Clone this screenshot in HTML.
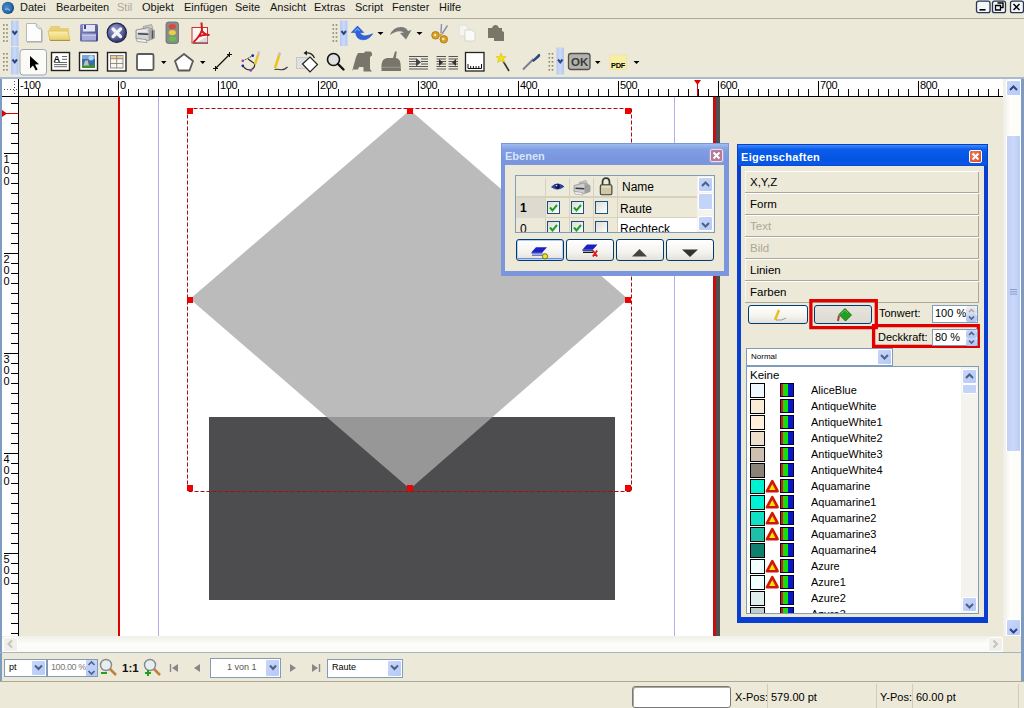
<!DOCTYPE html>
<html><head><meta charset="utf-8">
<style>
*{margin:0;padding:0;box-sizing:border-box}
html,body{width:1024px;height:708px;overflow:hidden;background:#ECE9D8;font-family:"Liberation Sans",sans-serif;font-size:11px;color:#000;position:relative}
.a{position:absolute}
.menu span{position:absolute;top:1px;font-size:11px;color:#141414}
.grip{position:absolute;width:6px;background-image:radial-gradient(circle at 1px 1px,#A5A08A 1px,transparent 1.2px);background-size:3.5px 3.5px}
.hdl{position:absolute;width:8px;background:linear-gradient(90deg,#B8CCF4,#CAD8F8 50%,#B0C4F0)}
.hdl:after{content:"";position:absolute;left:1px;width:6px;height:4px;top:var(--cv);background:linear-gradient(45deg,transparent 49%,#3C5A9C 50%,#3C5A9C 70%,transparent 71%) left/3px 4px no-repeat,linear-gradient(-45deg,transparent 49%,#3C5A9C 50%,#3C5A9C 70%,transparent 71%) right/3px 4px no-repeat}
.dd{position:absolute;width:0;height:0;border-left:3px solid transparent;border-right:3px solid transparent;border-top:3px solid #000}
.btn{position:absolute;border:1px solid #003C74;border-radius:3px;background:linear-gradient(#FFFFFF,#F4F3EE 60%,#E3E1D8)}
.chk{position:absolute;width:13px;height:13px;border:1px solid #1C5180;background:linear-gradient(135deg,#DCDCD7,#FFFFFF)}
.tab{position:absolute;left:745px;width:234px;height:22px;border-top:1px solid #fff;border-bottom:1px solid #ACA899;font-size:11.5px;padding:4px 0 0 5px}
.sbb{position:absolute;width:14px;height:14px;border-radius:2px;background:linear-gradient(135deg,#C8D6FA,#B6C9F6);border:1px solid #fff}
.row{position:absolute;left:750px;height:16px;width:200px}
.sw{position:absolute;left:0;top:0;width:15px;height:15px;border:1px solid #000}
.rgb{position:absolute;left:30px;top:0;width:14px;height:14px;border:1px solid #000030;background:linear-gradient(90deg,#E81010 0 2.5px,#10E010 2.5px 7.5px,#0818C8 7.5px)}
.warn{position:absolute;left:15px;top:0}
.nm{position:absolute;left:61px;top:1px;font-size:11px}
</style></head><body>
<!-- menu bar -->
<div class="a menu" style="left:0;top:0;width:1024px;height:18px">
  <svg class="a" style="left:0;top:0" width="18" height="18"><defs><radialGradient id="gApp" cx="0.4" cy="0.45" r="0.6"><stop offset="0" stop-color="#4E90CC"/><stop offset="0.7" stop-color="#2A68A8"/><stop offset="1" stop-color="#163C68"/></radialGradient></defs><circle cx="7.9" cy="7.9" r="6.1" fill="url(#gApp)"/><path d="M5 9.5Q8 8 10 10.5" stroke="#8CC0E8" stroke-width="1.2" fill="none"/></svg>
  <span style="left:20px">Datei</span>
  <span style="left:56px">Bearbeiten</span>
  <span style="left:117px;color:#ACA899">Stil</span>
  <span style="left:142px">Objekt</span>
  <span style="left:184px">Einfügen</span>
  <span style="left:235px">Seite</span>
  <span style="left:270px">Ansicht</span>
  <span style="left:314px">Extras</span>
  <span style="left:355px">Script</span>
  <span style="left:392px">Fenster</span>
  <span style="left:439px">Hilfe</span>
  <svg class="a" style="left:975px;top:0" width="49" height="15">
    <rect x="1.5" y="1.2" width="13.5" height="11.5" rx="2" fill="#F4F6FA" stroke="#243654" stroke-width="1.3"/>
    <rect x="17.5" y="1.2" width="13" height="11.5" rx="2" fill="#F4F6FA" stroke="#243654" stroke-width="1.3"/>
    <rect x="35.5" y="1.2" width="13" height="11.5" rx="2" fill="#F4F6FA" stroke="#243654" stroke-width="1.3"/>
    <path d="M4.5 9.8H10.5" stroke="#000" stroke-width="1.6"/>
    <path d="M20.5 5.5H25.5V10H20.5Z" fill="none" stroke="#000" stroke-width="1.3"/><path d="M22.5 3H28V7.5H26" fill="none" stroke="#000" stroke-width="1.4"/>
    <path d="M38.5 4L44.5 10M44.5 4L38.5 10" stroke="#000" stroke-width="1.5"/>
  </svg>
</div>
<div class="a" style="left:0;top:18px;width:1024px;height:1px;background:#ACA899"></div>

<!-- toolbar grips -->
<svg class="a" style="left:0;top:0" width="1024" height="78">
<defs><linearGradient id="gHdl" x1="0" y1="0" x2="1" y2="0"><stop offset="0" stop-color="#B4C8F2"/><stop offset="0.5" stop-color="#CCDAF8"/><stop offset="1" stop-color="#B4C6F0"/></linearGradient></defs>
<rect x="3" y="24.2" width="1.6" height="1.6" fill="#8A8670"/><rect x="6.2" y="24.2" width="1.6" height="1.6" fill="#8A8670"/><rect x="3" y="28.2" width="1.6" height="1.6" fill="#8A8670"/><rect x="6.2" y="28.2" width="1.6" height="1.6" fill="#8A8670"/><rect x="3" y="32.2" width="1.6" height="1.6" fill="#8A8670"/><rect x="6.2" y="32.2" width="1.6" height="1.6" fill="#8A8670"/><rect x="3" y="36.2" width="1.6" height="1.6" fill="#8A8670"/><rect x="6.2" y="36.2" width="1.6" height="1.6" fill="#8A8670"/><rect x="3" y="40.2" width="1.6" height="1.6" fill="#8A8670"/><rect x="6.2" y="40.2" width="1.6" height="1.6" fill="#8A8670"/><rect x="3" y="53" width="1.6" height="1.6" fill="#8A8670"/><rect x="6.2" y="53" width="1.6" height="1.6" fill="#8A8670"/><rect x="3" y="57" width="1.6" height="1.6" fill="#8A8670"/><rect x="6.2" y="57" width="1.6" height="1.6" fill="#8A8670"/><rect x="3" y="61" width="1.6" height="1.6" fill="#8A8670"/><rect x="6.2" y="61" width="1.6" height="1.6" fill="#8A8670"/><rect x="3" y="65" width="1.6" height="1.6" fill="#8A8670"/><rect x="6.2" y="65" width="1.6" height="1.6" fill="#8A8670"/><rect x="3" y="69" width="1.6" height="1.6" fill="#8A8670"/><rect x="6.2" y="69" width="1.6" height="1.6" fill="#8A8670"/><rect x="332.5" y="24.2" width="1.6" height="1.6" fill="#8A8670"/><rect x="335.7" y="24.2" width="1.6" height="1.6" fill="#8A8670"/><rect x="332.5" y="28.2" width="1.6" height="1.6" fill="#8A8670"/><rect x="335.7" y="28.2" width="1.6" height="1.6" fill="#8A8670"/><rect x="332.5" y="32.2" width="1.6" height="1.6" fill="#8A8670"/><rect x="335.7" y="32.2" width="1.6" height="1.6" fill="#8A8670"/><rect x="332.5" y="36.2" width="1.6" height="1.6" fill="#8A8670"/><rect x="335.7" y="36.2" width="1.6" height="1.6" fill="#8A8670"/><rect x="332.5" y="40.2" width="1.6" height="1.6" fill="#8A8670"/><rect x="335.7" y="40.2" width="1.6" height="1.6" fill="#8A8670"/><rect x="548.5" y="53" width="1.6" height="1.6" fill="#8A8670"/><rect x="551.7" y="53" width="1.6" height="1.6" fill="#8A8670"/><rect x="548.5" y="57" width="1.6" height="1.6" fill="#8A8670"/><rect x="551.7" y="57" width="1.6" height="1.6" fill="#8A8670"/><rect x="548.5" y="61" width="1.6" height="1.6" fill="#8A8670"/><rect x="551.7" y="61" width="1.6" height="1.6" fill="#8A8670"/><rect x="548.5" y="65" width="1.6" height="1.6" fill="#8A8670"/><rect x="551.7" y="65" width="1.6" height="1.6" fill="#8A8670"/><rect x="548.5" y="69" width="1.6" height="1.6" fill="#8A8670"/><rect x="551.7" y="69" width="1.6" height="1.6" fill="#8A8670"/><rect x="11" y="20.5" width="7.5" height="25.5" fill="url(#gHdl)"/><path d="M12.5 31L14.75 33.8L17 31" fill="none" stroke="#2E4480" stroke-width="2"/><rect x="11" y="47" width="7.5" height="27.5" fill="url(#gHdl)"/><path d="M12.5 59.5L14.75 62.3L17 59.5" fill="none" stroke="#2E4480" stroke-width="2"/><rect x="340" y="20.5" width="7.5" height="25.5" fill="url(#gHdl)"/><path d="M341.5 31L343.75 33.8L346 31" fill="none" stroke="#2E4480" stroke-width="2"/><rect x="556.5" y="47.5" width="7.5" height="27" fill="url(#gHdl)"/><path d="M558.0 59.5L560.25 62.3L562.5 59.5" fill="none" stroke="#2E4480" stroke-width="2"/>
</svg>
<svg class="a" style="left:0;top:0" width="1024" height="78">
<defs>
  <linearGradient id="gFold" x1="0" y1="0" x2="0" y2="1"><stop offset="0" stop-color="#FBF0B0"/><stop offset="1" stop-color="#E8CF6A"/></linearGradient>
  <linearGradient id="gFlop" x1="0" y1="0" x2="1" y2="1"><stop offset="0" stop-color="#8C92C8"/><stop offset="1" stop-color="#3A4080"/></linearGradient>
  <radialGradient id="gClose" cx="0.4" cy="0.35" r="0.7"><stop offset="0" stop-color="#9AA0D0"/><stop offset="0.6" stop-color="#5A609A"/><stop offset="1" stop-color="#262A58"/></radialGradient>
  <linearGradient id="gGray" x1="0" y1="0" x2="1" y2="1"><stop offset="0" stop-color="#E8E8E8"/><stop offset="1" stop-color="#8A8A8A"/></linearGradient>
</defs>
<!-- new doc -->
<path d="M26.5 23.5H36L41.5 29V41.5H26.5Z" fill="#FDFDFD" stroke="#B8B8B4"/>
<path d="M36 23.5Q36 29 41.5 29" fill="#E8E8E8" stroke="#B0B0B0"/>
<path d="M27 42H42V30" fill="none" stroke="#A8A8A0"/>
<!-- folder -->
<path d="M49 29L51 26H59L61 28H69V40H49Z" fill="#E6CF78"/>
<path d="M48 31H68L70 40H50Z" fill="url(#gFold)" stroke="#D8BD5C" stroke-width="0.8"/>
<path d="M50 40.5H70" stroke="#A89450" stroke-width="1"/>
<!-- floppy -->
<rect x="80" y="24" width="18" height="17.5" rx="1.5" fill="url(#gFlop)"/>
<rect x="83" y="25" width="12" height="6.5" fill="#E4E6F4"/>
<rect x="84" y="25" width="2" height="4" fill="#404890"/>
<rect x="82" y="33.5" width="14" height="7" fill="#A8ACD8"/>
<path d="M82 35.5H96" stroke="#C8CCEC"/>
<!-- close circle -->
<circle cx="116.8" cy="32.8" r="9.6" fill="url(#gClose)" stroke="#22264E" stroke-width="1.2"/>
<path d="M113 29L120.6 36.6M120.6 29L113 36.6" stroke="#F4F4F8" stroke-width="3.2" stroke-linecap="round"/>
<!-- printer -->
<path d="M143 26.5L151.5 24.5L153 28.5L144.5 30.5Z" fill="#C8C8C8" stroke="#8A8A8A" stroke-width="0.6"/>
<path d="M136 30L148 27.5L154.5 30.5V38L148.5 40.5L136 38.5Z" fill="#D4D4D4" stroke="#7A7A7A" stroke-width="0.7"/>
<path d="M137 31H147" stroke="#F4F4F4" stroke-width="1.4"/>
<path d="M138 33.8L148.5 34.3" stroke="#3A3A46" stroke-width="1.6"/>
<path d="M148.5 29V40.5L154.5 38V30.5Z" fill="#A8A8A8"/>
<path d="M152.5 30.5V38.5" stroke="#505050" stroke-width="1.4"/>
<path d="M136 38.5L146 39.5L147 42.5L137 41.5Z" fill="#F2F2F2" stroke="#8A8A8A" stroke-width="0.7"/>
<!-- traffic light -->
<rect x="166" y="22" width="12.5" height="21.5" rx="2.5" fill="#8A8A86" stroke="#6A6A66" stroke-width="0.8"/>
<ellipse cx="172.3" cy="26.5" rx="3.6" ry="2.6" fill="#D84848"/>
<ellipse cx="172.3" cy="32.6" rx="3.6" ry="2.6" fill="#E8D040"/>
<ellipse cx="172.3" cy="38.8" rx="3.6" ry="2.6" fill="#60C050"/>
<!-- pdf -->
<rect x="192" y="27.5" width="15.5" height="15.5" fill="#FAF6F6" stroke="#C83030" stroke-width="1"/>
<path d="M207.5 43H196L207.5 36Z" fill="#D0D4DC" opacity="0.8"/>
<path d="M193 43H208" stroke="#7A2020" stroke-width="1"/>
<path d="M201.5 22.5L202 30Q199.5 37 193.5 42M201.5 30Q204 35 209.5 35Q204 34 198 36.5" fill="none" stroke="#D81818" stroke-width="2"/>
<!-- undo -->
<path d="M351.3 32.5L357.5 25.9L363.8 32.5L360 32.5Q362 36.5 366 35.8Q369.5 35 372.7 33.7Q369 39.8 363 39.8Q356.5 39.8 355.5 32.5Z" fill="#2C64E0" stroke="#1A44B0" stroke-width="0.5"/>
<path d="M355 31.5L357.5 28.5L359.5 31" fill="none" stroke="#90BCFF" stroke-width="1"/>
<path d="M377.5 32H383.5L380.5 35Z" fill="#000"/>
<!-- redo -->
<path d="M390 35Q393 27 401 27Q406 27 408 31L411.5 30L406 39.5L400 33L404 32.5Q401 30.5 397 31.5Q393 32.5 390 35Z" fill="#7A7A76"/>
<path d="M416.5 32H422.5L419.5 35Z" fill="#000"/>
<!-- scissors -->
<path d="M441 33L441.5 24M442 34L447.5 25.5" stroke="#8A8EB0" stroke-width="1.4"/>
<circle cx="435.5" cy="35.3" r="3.8" fill="#D8A020" stroke="#A87010" stroke-width="0.8"/>
<circle cx="443.8" cy="39.3" r="3.8" fill="#D8A020" stroke="#A87010" stroke-width="0.8"/>
<circle cx="435" cy="35" r="1.3" fill="#F8E8B0"/><circle cx="443.3" cy="39" r="1.3" fill="#F8E8B0"/>
<path d="M438.5 34L442 33.5L441 37" fill="#D8A020"/>
<!-- copy -->
<path d="M459 25H466L468 27V36H459Z" fill="#F4F4F2" stroke="#DADAD6" stroke-width="0.8"/>
<path d="M465 30H472L475 33V41H465Z" fill="#FAFAF8" stroke="#CFCFCA" stroke-width="0.8"/>
<!-- paste -->
<path d="M488 28H492Q493 25 495.5 25Q498 25 499 28H502V31L504 32V41H494V38H488Z" fill="#797769"/>
<!-- selected button -->
<rect x="20" y="49.5" width="26.5" height="25.5" rx="3" fill="#FAFAF7" stroke="#9DA5B0" stroke-width="1"/>
<path d="M30 56V68.5L33 65.5L35.8 70.5L37.6 69.5L35 64.5L39 64.3Z" fill="#000"/>
<!-- text frame -->
<rect x="51.5" y="52.5" width="18" height="18" fill="#fff" stroke="#222" stroke-width="1.4"/>
<text x="53.6" y="61.5" font-family="Liberation Sans" font-size="9" font-weight="bold" fill="#111">A</text>
<path d="M62 56.5H67M62 59.3H67M54 62.5H67M54 64.6H67M54 66.7H67" stroke="#333" stroke-width="0.75"/>
<!-- image frame -->
<rect x="79.5" y="52.5" width="18" height="18" fill="#fff" stroke="#222" stroke-width="1.4"/>
<rect x="82" y="55" width="13" height="13" fill="#3A6EA8"/>
<rect x="82" y="55" width="13" height="4" fill="#7CA8D8"/>
<circle cx="91" cy="58" r="2.5" fill="#B8D8F0"/>
<rect x="82" y="65" width="13" height="3" fill="#3C9030"/>
<path d="M83.5 65.5L85 61L87.5 60L89 65.5Z" fill="#C8C0B8"/>
<!-- table -->
<rect x="107.5" y="52.5" width="18.5" height="18.5" fill="#fff" stroke="#222" stroke-width="1.4"/>
<rect x="110.5" y="55.5" width="12.5" height="12.5" fill="#FBF6E8" stroke="#777" stroke-width="0.8"/>
<rect x="111" y="56" width="11.5" height="2.5" fill="#F0D090"/>
<path d="M116.7 55.5V68M110.5 58.7H123M110.5 63.5H123" stroke="#777" stroke-width="0.8"/>
<!-- rect shape -->
<rect x="137" y="54" width="16.5" height="16" rx="1.5" fill="#fff" stroke="#5A5A5A" stroke-width="1.8"/>
<path d="M161 61H166.5L163.75 64Z" fill="#000"/>
<!-- pentagon -->
<path d="M184 54L193 61L189.5 70.5H178.5L175 61Z" fill="#fff" stroke="#5A5A5A" stroke-width="1.8" stroke-linejoin="round"/>
<path d="M200 61H205.5L202.75 64Z" fill="#000"/>
<!-- line -->
<path d="M215.5 68.5L229.5 54.5" stroke="#111" stroke-width="1.2"/>
<path d="M213 68.5H218M215.5 66V71M227 54.5H232M229.5 52V57" stroke="#111" stroke-width="1"/>
<!-- bezier -->
<path d="M243 60.8L252.7 55.7" stroke="#333" stroke-width="1" stroke-dasharray="1.5,1"/>
<path d="M242.8 65.8Q246.5 70.5 251 69.8Q255.5 67.5 254.5 63.5L248 59" fill="none" stroke="#222" stroke-width="1.1"/>
<path d="M255 64.5L258.2 54.5" stroke="#E8C428" stroke-width="2.4"/><path d="M258 55L259 51.5" stroke="#D8B8C0" stroke-width="2.4"/>
<circle cx="252.7" cy="55.7" r="1.4" fill="#1828A8"/><circle cx="242.8" cy="60.8" r="1.4" fill="#A040C0"/><circle cx="242.8" cy="65.8" r="1.4" fill="#1828A8"/><circle cx="250.8" cy="70.4" r="1.4" fill="#A040C0"/>
<!-- freehand -->
<path d="M275 68L279.2 55" stroke="#E8C428" stroke-width="2.6"/><path d="M279 55.5L280 52.5" stroke="#D8B8C0" stroke-width="2.6"/>
<path d="M274.5 69.5Q278 69 281 69.8Q284.5 70 287.5 67" fill="none" stroke="#333" stroke-width="1.1"/>
<!-- rotate -->
<rect x="296.5" y="57.5" width="11" height="11" fill="#E0E0E0" stroke="#999" stroke-width="0.8" stroke-dasharray="1,1"/>
<path d="M302.5 64L310 57L317.5 64.5L310 72Z" fill="#fff" stroke="#222" stroke-width="1.2"/>
<path d="M306 53Q312 52.5 314.5 58" fill="none" stroke="#222" stroke-width="1.2"/><path d="M303.5 53L307 50.5V55.5Z" fill="#222"/>
<!-- zoom -->
<circle cx="333.5" cy="59.5" r="6" fill="#E0E0E0" stroke="#111" stroke-width="1.6"/>
<path d="M338 64L343.5 69.5" stroke="#111" stroke-width="2.4" stroke-linecap="round"/>
<!-- edit text -->
<path d="M352 71.5L353 68L356 57L358 53H364L365 51.5H370.5L372 53V55.5L370 57V69L372 71.5H363.5V67H359L358 69.5H352Z" fill="#78766A"/>
<!-- story editor -->
<path d="M381.5 71V65Q382 58.5 387 58H393L395 51.5H396.8L395.8 58Q400 58.5 400.5 63.5L401 71Z" fill="#78766A"/>
<path d="M381.5 67.3H401" stroke="#A8A498" stroke-width="0.8"/>
<!-- link frames -->
<path d="M409 56.5H428M409 59H416M421 59H428M409 61.5H416M421 61.5H428M409 64H416M421 64H428M409 66.5H428M409 69H428" stroke="#555" stroke-width="1"/>
<path d="M416 58L421 62.2L416 66.5Z" fill="#444"/>
<!-- unlink -->
<path d="M436.5 56.5H446M436.5 59H446M436.5 61.5H446M436.5 64H446M436.5 66.5H446M436.5 69H446M448.5 56.5H458M448.5 59H458M448.5 61.5H458M448.5 64H458M448.5 66.5H458M448.5 69H458" stroke="#555" stroke-width="1"/>
<path d="M439 59L443 62.5L439 66ZM456 59L452 62.5L456 66Z" fill="#333"/>
<!-- measure -->
<rect x="465.5" y="52.5" width="18.5" height="18.5" fill="#fff" stroke="#222" stroke-width="1.3"/>
<path d="M468 64V68.5H481.5V64M470.7 66V68.5M473.4 66V68.5M476.1 66V68.5M478.8 66V68.5" fill="none" stroke="#111" stroke-width="1"/>
<!-- wand -->
<path d="M503 61L509 71" stroke="#333" stroke-width="1.6"/>
<path d="M501 53L502.5 56.5L506 56.5L503.5 59L504.5 62.5L501 60.5L497.5 62.5L498.5 59L496 56.5L499.5 56.5Z" fill="#F0E020" stroke="#D8C010" stroke-width="0.6"/>
<!-- eyedropper -->
<path d="M523 69.5L533.5 59" stroke="#7A8090" stroke-width="2"/>
<path d="M532 60.5L537.5 55Q539.5 53 540 54.5Q541 56 539 57.5L533.5 62Z" fill="#2C4A80"/>
<!-- OK -->
<rect x="568.5" y="53.5" width="21.5" height="16" rx="2.5" fill="#B4B2AC" stroke="#505050" stroke-width="1.3"/>
<text x="571" y="66.3" font-family="Liberation Sans" font-size="11.5" font-weight="bold" fill="#3A3A3A">OK</text>
<path d="M595 61H600.5L597.75 64Z" fill="#000"/>
<!-- pdf -->
<rect x="610" y="55" width="16.5" height="14.5" fill="#F8F0A0" stroke="#E8E0A0" stroke-width="0.6"/>
<text x="611" y="67.8" font-family="Liberation Sans" font-size="7.4" font-weight="bold" fill="#000" letter-spacing="-0.2">PDF</text>
<path d="M633.5 61H639.5L636.5 64Z" fill="#000"/>
</svg>


<!-- ruler frame -->
<div class="a" style="left:0;top:77px;width:1024px;height:2px;background:#A9B9CF"></div>
<div class="a" style="left:2px;top:79px;width:1001px;height:18px;background:#fff"></div>
<div class="a" style="left:0;top:79px;width:2px;height:602px;background:#7E9CC0"></div>
<div class="a" style="left:2px;top:96px;width:1001px;height:1px;background:#000"></div>
<div class="a" style="left:18px;top:79px;width:1px;height:557px;background:#000"></div>
<div class="a" style="left:2px;top:97px;width:16px;height:539px;background:#fff"></div>
<svg class="a" style="left:0;top:79px" width="1003" height="18">
<path d="M28.5 10V17 M38.5 10V17 M48.5 10V17 M58.5 10V17 M68.5 10V17 M78.5 10V17 M88.5 10V17 M98.5 10V17 M108.5 10V17 M118.5 2V17 M128.5 10V17 M138.5 10V17 M148.5 10V17 M158.5 10V17 M168.5 10V17 M178.5 10V17 M188.5 10V17 M198.5 10V17 M208.5 10V17 M218.5 2V17 M228.5 10V17 M238.5 10V17 M248.5 10V17 M258.5 10V17 M268.5 10V17 M278.5 10V17 M288.5 10V17 M298.5 10V17 M308.5 10V17 M318.5 2V17 M328.5 10V17 M338.5 10V17 M348.5 10V17 M358.5 10V17 M368.5 10V17 M378.5 10V17 M388.5 10V17 M398.5 10V17 M408.5 10V17 M418.5 2V17 M428.5 10V17 M438.5 10V17 M448.5 10V17 M458.5 10V17 M468.5 10V17 M478.5 10V17 M488.5 10V17 M498.5 10V17 M508.5 10V17 M518.5 2V17 M528.5 10V17 M538.5 10V17 M548.5 10V17 M558.5 10V17 M568.5 10V17 M578.5 10V17 M588.5 10V17 M598.5 10V17 M608.5 10V17 M618.5 2V17 M628.5 10V17 M638.5 10V17 M648.5 10V17 M658.5 10V17 M668.5 10V17 M678.5 10V17 M688.5 10V17 M698.5 10V17 M708.5 10V17 M718.5 2V17 M728.5 10V17 M738.5 10V17 M748.5 10V17 M758.5 10V17 M768.5 10V17 M778.5 10V17 M788.5 10V17 M798.5 10V17 M808.5 10V17 M818.5 2V17 M828.5 10V17 M838.5 10V17 M848.5 10V17 M858.5 10V17 M868.5 10V17 M878.5 10V17 M888.5 10V17 M898.5 10V17 M908.5 10V17 M918.5 2V17 M928.5 10V17 M938.5 10V17 M948.5 10V17 M958.5 10V17 M968.5 10V17 M978.5 10V17 M988.5 10V17 M998.5 10V17" stroke="#000" stroke-width="1"/>
<text x="20" y="10" font-family="Liberation Sans" font-size="11" letter-spacing="-0.4">-100</text>
<text x="120" y="10" font-family="Liberation Sans" font-size="11" letter-spacing="-0.4">0</text>
<text x="220" y="10" font-family="Liberation Sans" font-size="11" letter-spacing="-0.4">100</text>
<text x="320" y="10" font-family="Liberation Sans" font-size="11" letter-spacing="-0.4">200</text>
<text x="420" y="10" font-family="Liberation Sans" font-size="11" letter-spacing="-0.4">300</text>
<text x="520" y="10" font-family="Liberation Sans" font-size="11" letter-spacing="-0.4">400</text>
<text x="620" y="10" font-family="Liberation Sans" font-size="11" letter-spacing="-0.4">500</text>
<text x="720" y="10" font-family="Liberation Sans" font-size="11" letter-spacing="-0.4">600</text>
<text x="820" y="10" font-family="Liberation Sans" font-size="11" letter-spacing="-0.4">700</text>
<text x="920" y="10" font-family="Liberation Sans" font-size="11" letter-spacing="-0.4">800</text>
</svg>
<svg class="a" style="left:2px;top:97px" width="17" height="540">
<path d="M9 6.5H16 M9 16.5H16 M9 26.5H16 M9 36.5H16 M9 46.5H16 M2 56.5H16 M9 66.5H16 M9 76.5H16 M9 86.5H16 M9 96.5H16 M9 106.5H16 M9 116.5H16 M9 126.5H16 M9 136.5H16 M9 146.5H16 M2 156.5H16 M9 166.5H16 M9 176.5H16 M9 186.5H16 M9 196.5H16 M9 206.5H16 M9 216.5H16 M9 226.5H16 M9 236.5H16 M9 246.5H16 M2 256.5H16 M9 266.5H16 M9 276.5H16 M9 286.5H16 M9 296.5H16 M9 306.5H16 M9 316.5H16 M9 326.5H16 M9 336.5H16 M9 346.5H16 M2 356.5H16 M9 366.5H16 M9 376.5H16 M9 386.5H16 M9 396.5H16 M9 406.5H16 M9 416.5H16 M9 426.5H16 M9 436.5H16 M9 446.5H16 M2 456.5H16 M9 466.5H16 M9 476.5H16 M9 486.5H16 M9 496.5H16 M9 506.5H16 M9 516.5H16 M9 526.5H16 M9 536.5H16" stroke="#000" stroke-width="1"/>
<text x="1.5" y="65.5" font-family="Liberation Sans" font-size="11">1</text>
<text x="1.5" y="76.5" font-family="Liberation Sans" font-size="11">0</text>
<text x="1.5" y="87.5" font-family="Liberation Sans" font-size="11">0</text>
<text x="1.5" y="165.5" font-family="Liberation Sans" font-size="11">2</text>
<text x="1.5" y="176.5" font-family="Liberation Sans" font-size="11">0</text>
<text x="1.5" y="187.5" font-family="Liberation Sans" font-size="11">0</text>
<text x="1.5" y="265.5" font-family="Liberation Sans" font-size="11">3</text>
<text x="1.5" y="276.5" font-family="Liberation Sans" font-size="11">0</text>
<text x="1.5" y="287.5" font-family="Liberation Sans" font-size="11">0</text>
<text x="1.5" y="365.5" font-family="Liberation Sans" font-size="11">4</text>
<text x="1.5" y="376.5" font-family="Liberation Sans" font-size="11">0</text>
<text x="1.5" y="387.5" font-family="Liberation Sans" font-size="11">0</text>
<text x="1.5" y="465.5" font-family="Liberation Sans" font-size="11">5</text>
<text x="1.5" y="476.5" font-family="Liberation Sans" font-size="11">0</text>
<text x="1.5" y="487.5" font-family="Liberation Sans" font-size="11">0</text>
</svg>
<!-- corner dotted cross -->
<svg class="a" style="left:2px;top:79px" width="16" height="17"><path d="M12.5 2V15M2 10.5H15" stroke="#555" stroke-dasharray="1,2"/></svg>

<!-- canvas -->
<div class="a" style="left:19px;top:97px;width:984px;height:539px;background:#ECE9D8"></div>
<div class="a" style="left:119px;top:97px;width:596px;height:539px;background:#fff"></div>
<div class="a" style="left:118px;top:97px;width:2px;height:539px;background:#E00000"></div>
<div class="a" style="left:713px;top:97px;width:3px;height:539px;background:#C01010"></div>
<div class="a" style="left:716px;top:97px;width:4px;height:539px;background:#505050"></div>
<div class="a" style="left:158px;top:97px;width:1px;height:539px;background:#B0B0F0"></div>
<div class="a" style="left:674px;top:97px;width:1px;height:539px;background:#B0B0F0"></div>

<svg class="a" style="left:0;top:0" width="1024" height="708">
  <rect x="209" y="417" width="406" height="183" fill="#4D4D4F"/>
  <polygon points="410,110 628,299 410,489 190,299" fill="#AAAAAA" fill-opacity="0.8"/>
  <rect x="187.5" y="108.5" width="444" height="383" fill="none" stroke="#A01010" stroke-width="1" stroke-dasharray="4,2"/>
  <g fill="#F00000">
    <rect x="187" y="108" width="6" height="6"/><rect x="407" y="108" width="6" height="6"/><rect x="625" y="108" width="6" height="6"/>
    <rect x="187" y="297" width="6" height="6"/><rect x="625" y="297" width="6" height="6"/>
    <rect x="187" y="485" width="6" height="6"/><rect x="407" y="485" width="6" height="6"/><rect x="625" y="485" width="6" height="6"/>
  </g>
  <!-- ruler markers -->
  <path d="M697.5 84V96" stroke="#E00000"/><path d="M694 80H701L697.5 85Z" fill="#E00000"/>
  <path d="M5 113.5H18" stroke="#E00000"/><path d="M2 110V117L7 113.5Z" fill="#E00000"/>
</svg>

<!-- right vertical scrollbar -->
<div class="a" style="left:1003px;top:79px;width:18px;height:557px;background:linear-gradient(90deg,#EEEDE5,#FDFDFA 40%,#FBFBF8)"></div>
<div class="sbb" style="left:1006px;top:80px;width:15px;height:16px"></div>
<div class="a" style="left:1006px;top:135px;width:15px;height:317px;border-radius:2px;background:linear-gradient(90deg,#C0D0F6,#CCD8FA 50%,#B8CCF6);border:1px solid #fff"></div>
<svg class="a" style="left:1006px;top:285px" width="15" height="14"><path d="M4 4.5H11M4 6.8H11M4 9.1H11" stroke="#8C9CC8" stroke-width="1"/></svg>
<div class="sbb" style="left:1006px;top:619px;width:15px;height:17px"></div>
<svg class="a" style="left:1006px;top:80px" width="15" height="556"><path d="M4 10L7.5 6.5L11 10M4 549L7.5 552.5L11 549" fill="none" stroke="#2E4480" stroke-width="2"/></svg>
<div class="a" style="left:1021px;top:79px;width:3px;height:602px;background:#7F9ABE"></div>
<!-- horizontal scrollbar -->
<div class="a" style="left:2px;top:636px;width:1001px;height:16px;background:linear-gradient(#F0EFE8,#FDFDFA 50%,#FAFAF6)"></div>
<div class="a" style="left:3px;top:637px;width:15px;height:15px;border-radius:2px;background:#F0EFEA;border:1px solid #fff"></div>
<div class="a" style="left:988px;top:637px;width:15px;height:15px;border-radius:2px;background:#F0EFEA;border:1px solid #fff"></div>
<svg class="a" style="left:0;top:636px" width="1024" height="16"><path d="M12 4.5L8.5 8L12 11.5M993.5 4.5L997 8L993.5 11.5" fill="none" stroke="#C4C4BC" stroke-width="2"/></svg>
<div class="a" style="left:1003px;top:636px;width:18px;height:16px;background:#ECE9D8"></div>
<div class="a" style="left:0;top:652px;width:1021px;height:1px;background:#A4B4C8"></div>

<!-- status 1 -->
<div class="a" style="left:0;top:681px;width:1024px;height:1px;background:#ACA899"></div>

<!-- Ebenen dialog -->
<div class="a" style="left:501px;top:143px;width:228px;height:133px;background:#7B96DC;"></div>
<div class="a" style="left:502px;top:144px;width:226px;height:21px;background:linear-gradient(#A2BCF0,#819FE4 25%,#7895DE 75%,#7C97DA)"></div>
<div class="a" style="left:505px;top:150px;font-weight:bold;font-size:11px;color:#D8E4F8">Ebenen</div>
<div class="a" style="left:710px;top:149px;width:13px;height:13px;border:1px solid #E8E0F0;border-radius:2px;background:#B87A94;box-shadow:0 0 0 1px #9AA8D8"></div>
<svg class="a" style="left:710px;top:149px" width="13" height="13"><path d="M3.5 3.5L9.5 9.5M9.5 3.5L3.5 9.5" stroke="#fff" stroke-width="2"/></svg>
<div class="a" style="left:505px;top:165px;width:219px;height:106px;background:#ECE9D8"></div>
<!-- table -->
<div class="a" style="left:515px;top:175px;width:200px;height:58px;border:1px solid #7F9DB9;background:#fff;overflow:hidden">
  <div class="a" style="left:0;top:0;width:181px;height:22px;background:#EBEADB;border-bottom:2px solid #D8D2BD"></div>
  <div class="a" style="left:29px;top:2px;width:1px;height:18px;background:#D8D2BD"></div>
  <div class="a" style="left:53px;top:2px;width:1px;height:18px;background:#D8D2BD"></div>
  <div class="a" style="left:77px;top:2px;width:1px;height:18px;background:#D8D2BD"></div>
  <div class="a" style="left:101px;top:2px;width:1px;height:18px;background:#D8D2BD"></div>
  <div class="a" style="left:106px;top:4px;font-size:12px">Name</div>
  <div class="a" style="left:0;top:22px;width:181px;height:20px;background:#ECE9D8;border-bottom:1px solid #D8D2BD"></div>
  <div class="a" style="left:0;top:22px;width:29px;height:20px;background:#DDDBD0"></div>
  <div class="a" style="left:0;top:42px;width:181px;height:20px;background:#ECE9D8"></div>
  <div class="a" style="left:101px;top:42px;width:80px;height:20px;background:#fff"></div>
  <div class="a" style="left:29px;top:22px;width:1px;height:40px;background:#D8D2BD"></div>
  <div class="a" style="left:53px;top:22px;width:1px;height:40px;background:#D8D2BD"></div>
  <div class="a" style="left:77px;top:22px;width:1px;height:40px;background:#D8D2BD"></div>
  <div class="a" style="left:101px;top:22px;width:1px;height:40px;background:#D8D2BD"></div>
  <div class="a" style="left:4px;top:25px;font-size:12px;font-weight:bold">1</div>
  <div class="a" style="left:4px;top:46px;font-size:12px">0</div>
  <div class="a" style="left:104px;top:26px;font-size:12px">Raute</div>
  <div class="a" style="left:104px;top:46px;font-size:12px">Rechteck</div>
  <div class="chk" style="left:31px;top:25px"></div>
  <div class="chk" style="left:55px;top:25px"></div>
  <div class="chk" style="left:79px;top:25px"></div>
  <div class="chk" style="left:31px;top:45px"></div>
  <div class="chk" style="left:55px;top:45px"></div>
  <div class="chk" style="left:79px;top:45px"></div>
  <svg class="a" style="left:0;top:0" width="200" height="58">
    <path d="M34 31.5L36.5 34.5L41 29M58 31.5L60.5 34.5L65 29M34 51.5L36.5 54.5L41 49M58 51.5L60.5 54.5L65 49" fill="none" stroke="#21A121" stroke-width="2"/>
    <!-- eye -->
    <path d="M35.5 11Q41 5 48 10.5Q41.5 15.5 35.5 11Z" fill="#2848B0" stroke="#102070" stroke-width="0.6"/>
    <circle cx="41.5" cy="10.5" r="2.4" fill="#0C1450"/><circle cx="40.5" cy="9.6" r="0.9" fill="#C8D4FF"/>
    <!-- printer -->
    <path d="M63 6.5L70 4.5L71.5 8L64.5 9.5Z" fill="#C8C8C8" stroke="#8A8A8A" stroke-width="0.5"/>
    <path d="M58 9.5L68 7L74 9.5V15.5L68.5 17.5L58 15.5Z" fill="#D0D0D0" stroke="#7A7A7A" stroke-width="0.6"/>
    <path d="M59.5 12.3L68.5 12.8" stroke="#3A3A46" stroke-width="1.4"/>
    <path d="M68.5 8V17.5L74 15.5V9.5Z" fill="#A0A0A0"/>
    <path d="M58 15.5L66 16.5L67 19L59 18Z" fill="#F2F2F2" stroke="#8A8A8A" stroke-width="0.5"/>
    <!-- lock -->
    <path d="M86.5 9V6.5Q86.5 2.2 90 2.2Q93.5 2.2 93.5 6.5V9" fill="none" stroke="#3A3A30" stroke-width="1.8"/>
    <rect x="84.3" y="8.8" width="11.6" height="10" rx="1.5" fill="#CFC8A8" stroke="#3A3A30" stroke-width="1.1"/>
    <path d="M86 11H94" stroke="#F0ECD8" stroke-width="1"/>
  </svg>
  <!-- scroll -->
  <div class="a" style="left:181px;top:0;width:17px;height:56px;background:#F4F3EE"></div>
  <div class="sbb" style="left:182px;top:1px;width:15px;height:15px"></div>
  <div class="a" style="left:182px;top:17px;width:15px;height:17px;background:#C4D4F8;border:1px solid #fff;border-radius:2px"></div>
  <div class="sbb" style="left:182px;top:40px;width:15px;height:15px"></div>
  <svg class="a" style="left:182px;top:1px" width="15" height="56"><path d="M4 9L7.5 5.5L11 9M4 46L7.5 49.5L11 46" fill="none" stroke="#4D6185" stroke-width="2"/></svg>
</div>
<!-- buttons -->
<div class="btn" style="left:516px;top:239px;width:48px;height:22px;box-shadow:inset 0 0 0 1px #B8CCF4,inset 0 -2px #6E90D8"></div>
<div class="btn" style="left:566px;top:239px;width:48px;height:22px"></div>
<div class="btn" style="left:616px;top:239px;width:48px;height:22px"></div>
<div class="btn" style="left:666px;top:239px;width:48px;height:22px"></div>
<svg class="a" style="left:0;top:0" width="1024" height="708" overflow="visible">
  <path d="M632 256.5L647 256.5L639.5 249Z" fill="#444"/>
  <path d="M682 249.5L698 249.5L690 257Z" fill="#333"/>
  <!-- new layer icon -->
  <path d="M536 247.2H547L542.5 252.3H531.5Z" fill="#1820C8"/><path d="M531.5 252.3H542.5V253.5H531.5Z" fill="#101898"/>
  <path d="M532 254.5H543L542 256H532Z" fill="#6878D8"/>
  <circle cx="545" cy="256.3" r="2.6" fill="#F0E818" stroke="#6A6A18" stroke-width="0.9"/>
  <!-- delete layer icon -->
  <path d="M587 244.5H597.5L593 249.5H582.5Z" fill="#1820C8"/><path d="M582.5 249.5H593V250.8H582.5Z" fill="#101898"/>
  <path d="M583 252.3H593" stroke="#000" stroke-width="1.2"/>
  <path d="M592.8 250.5L597.2 256.5M597.2 250.5L592.8 256.5" stroke="#E01818" stroke-width="1.8"/>
</svg>

<!-- Eigenschaften -->
<div class="a" style="left:737px;top:144px;width:251px;height:479px;background:#0A3ED0;"></div>
<div class="a" style="left:738px;top:145px;width:249px;height:21px;background:linear-gradient(#3D8CF8,#0C5DEB 20%,#0454E4 70%,#0A58E8 90%,#0848D0)"></div>
<div class="a" style="left:741px;top:151px;font-weight:bold;font-size:11px;color:#fff;letter-spacing:0.3px">Eigenschaften</div>
<div class="a" style="left:969px;top:150px;width:13px;height:13px;border:1px solid #fff;border-radius:2px;background:radial-gradient(circle at 35% 35%,#F08060,#D64520)"></div>
<svg class="a" style="left:969px;top:150px" width="13" height="13"><path d="M3.5 3.5L9.5 9.5M9.5 3.5L3.5 9.5" stroke="#fff" stroke-width="2"/></svg>
<div class="a" style="left:741px;top:166px;width:243px;height:451px;background:#ECE9D8"></div>
<div class="a" style="left:745px;top:171px;width:234px;height:132px;border-right:1px solid #ACA899;border-left:1px solid #F8F7F2"></div>
<div class="tab" style="top:171px">X,Y,Z</div>
<div class="tab" style="top:193px">Form</div>
<div class="tab" style="top:215px;color:#ACA899">Text</div>
<div class="tab" style="top:237px;color:#ACA899">Bild</div>
<div class="tab" style="top:259px">Linien</div>
<div class="tab" style="top:281px">Farben</div>
<!-- color buttons -->
<div class="btn" style="left:748px;top:305px;width:60px;height:19px"></div>
<div class="btn" style="left:814px;top:305px;width:58px;height:19px;background:linear-gradient(#E6E4DC,#DCDAD1)"></div>
<!-- red boxes -->
<svg class="a" style="left:0;top:0" width="1024" height="708" overflow="visible">
  <path d="M810.9 300.6H876.3V327.6H810.9Z" fill="none" stroke="#E00000" stroke-width="3.3"/>
  <path d="M873.6 325.6H978.3V346.3H873.6Z" fill="none" stroke="#E00000" stroke-width="3.3"/>
  <!-- pencil -->
  <path d="M775 320L779 310" stroke="#E8C020" stroke-width="2.5"/><path d="M776 320Q782 321 786 318" stroke="#9A9A9A" fill="none"/>
  <!-- bucket -->
  <path d="M839 314.5L845 308.5L851.5 315L845.5 321Z" fill="#22A022" stroke="#106010" stroke-width="0.8"/>
  <path d="M841 314L845 310L848 313" fill="none" stroke="#70D070" stroke-width="0.8"/>
  <path d="M839 315.5L838 321" stroke="#A04828" stroke-width="2"/>
</svg>
<div class="a" style="left:879px;top:307px;font-size:11px">Tonwert:</div>
<div class="a" style="left:878px;top:331px;font-size:11px">Deckkraft:</div>
<div class="a" style="left:932px;top:305px;width:46px;height:18px;border:1px solid #7F9DB9;background:#fff"></div>
<div class="a" style="left:935px;top:307px;font-size:11px">100 %</div>
<div class="a" style="left:932px;top:329px;width:46px;height:17px;border:1px solid #7F9DB9;background:#fff"></div>
<div class="a" style="left:935px;top:331px;font-size:11px">80 %</div>
<div class="a" style="left:966px;top:306px;width:11px;height:8px;border-radius:2px;background:linear-gradient(#F0F0F0,#D8DCE4)"></div>
<div class="a" style="left:966px;top:314px;width:11px;height:8px;border-radius:2px;background:linear-gradient(#C8D6FA,#B0C4F2)"></div>
<div class="a" style="left:966px;top:330px;width:11px;height:8px;border-radius:2px;background:linear-gradient(#C8D6FA,#B0C4F2)"></div>
<div class="a" style="left:966px;top:338px;width:11px;height:8px;border-radius:2px;background:linear-gradient(#C8D6FA,#B0C4F2)"></div>
<svg class="a" style="left:966px;top:306px" width="11" height="40"><path d="M3 6L5.5 3.5L8 6" fill="none" stroke="#A8A8A8" stroke-width="1.5"/><path d="M3 10.5L5.5 13L8 10.5M3 29L5.5 26.5L8 29M3 34.5L5.5 37L8 34.5" fill="none" stroke="#4D6185" stroke-width="1.6"/></svg>
<!-- blend combo -->
<div class="a" style="left:746px;top:348px;width:147px;height:18px;border:1px solid #7F9DB9;background:#fff"></div>
<div class="a" style="left:751px;top:352px;font-size:8px">Normal</div>
<div class="sbb" style="left:877px;top:349px;width:15px;height:16px"></div>
<svg class="a" style="left:877px;top:349px" width="15" height="16"><path d="M4 6L7.5 9.5L11 6" fill="none" stroke="#4D6185" stroke-width="2"/></svg>
<!-- color list -->
<div class="a" style="left:746px;top:366px;width:233px;height:248px;border:1px solid #7F9DB9;background:#fff;overflow:hidden">
  <div class="a" style="left:214px;top:0;width:17px;height:246px;background:#F4F3EE"></div>
  <div class="sbb" style="left:215px;top:2px;width:15px;height:15px"></div>
  <div class="a" style="left:215px;top:17px;width:15px;height:10px;background:#C4D4F8;border:1px solid #fff;border-radius:2px"></div>
  <div class="sbb" style="left:215px;top:230px;width:15px;height:15px"></div>
  <svg class="a" style="left:215px;top:2px" width="15" height="244"><path d="M4 9L7.5 5.5L11 9M4 235L7.5 238.5L11 235" fill="none" stroke="#4D6185" stroke-width="2"/></svg>
</div>
<div class="a" style="left:750px;top:369px;font-size:11.5px">Keine</div>
<div class="a" style="left:747px;top:367px;width:214px;height:246px;overflow:hidden">
<div class="row" style="left:3px;top:16px"><div class="sw" style="background:#F0F8FF"></div><div class="rgb"></div><div class="nm">AliceBlue</div></div>
<div class="row" style="left:3px;top:32px"><div class="sw" style="background:#FAEBD7"></div><div class="rgb"></div><div class="nm">AntiqueWhite</div></div>
<div class="row" style="left:3px;top:48px"><div class="sw" style="background:#FFEFDB"></div><div class="rgb"></div><div class="nm">AntiqueWhite1</div></div>
<div class="row" style="left:3px;top:64px"><div class="sw" style="background:#EEDFCC"></div><div class="rgb"></div><div class="nm">AntiqueWhite2</div></div>
<div class="row" style="left:3px;top:80px"><div class="sw" style="background:#CDC0B0"></div><div class="rgb"></div><div class="nm">AntiqueWhite3</div></div>
<div class="row" style="left:3px;top:96px"><div class="sw" style="background:#8B8378"></div><div class="rgb"></div><div class="nm">AntiqueWhite4</div></div>
<div class="row" style="left:3px;top:112px"><div class="sw" style="background:#00F0D0"></div><svg class="warn" width="15" height="15"><path d="M7.3 2.2L12.6 12.2H2Z" fill="#FFE000" stroke="#D01808" stroke-width="2.6" stroke-linejoin="round"/></svg><div class="rgb"></div><div class="nm">Aquamarine</div></div>
<div class="row" style="left:3px;top:128px"><div class="sw" style="background:#00F2D4"></div><svg class="warn" width="15" height="15"><path d="M7.3 2.2L12.6 12.2H2Z" fill="#FFE000" stroke="#D01808" stroke-width="2.6" stroke-linejoin="round"/></svg><div class="rgb"></div><div class="nm">Aquamarine1</div></div>
<div class="row" style="left:3px;top:144px"><div class="sw" style="background:#10E0C4"></div><svg class="warn" width="15" height="15"><path d="M7.3 2.2L12.6 12.2H2Z" fill="#FFE000" stroke="#D01808" stroke-width="2.6" stroke-linejoin="round"/></svg><div class="rgb"></div><div class="nm">Aquamarine2</div></div>
<div class="row" style="left:3px;top:160px"><div class="sw" style="background:#1EC0A8"></div><svg class="warn" width="15" height="15"><path d="M7.3 2.2L12.6 12.2H2Z" fill="#FFE000" stroke="#D01808" stroke-width="2.6" stroke-linejoin="round"/></svg><div class="rgb"></div><div class="nm">Aquamarine3</div></div>
<div class="row" style="left:3px;top:176px"><div class="sw" style="background:#10806E"></div><div class="rgb"></div><div class="nm">Aquamarine4</div></div>
<div class="row" style="left:3px;top:192px"><div class="sw" style="background:#F0FFFF"></div><svg class="warn" width="15" height="15"><path d="M7.3 2.2L12.6 12.2H2Z" fill="#FFE000" stroke="#D01808" stroke-width="2.6" stroke-linejoin="round"/></svg><div class="rgb"></div><div class="nm">Azure</div></div>
<div class="row" style="left:3px;top:208px"><div class="sw" style="background:#F0FFFF"></div><svg class="warn" width="15" height="15"><path d="M7.3 2.2L12.6 12.2H2Z" fill="#FFE000" stroke="#D01808" stroke-width="2.6" stroke-linejoin="round"/></svg><div class="rgb"></div><div class="nm">Azure1</div></div>
<div class="row" style="left:3px;top:224px"><div class="sw" style="background:#E0EEEE"></div><div class="rgb"></div><div class="nm">Azure2</div></div>
<div class="row" style="left:3px;top:240px"><div class="sw" style="background:#C1CDCD"></div><div class="rgb"></div><div class="nm">Azure3</div></div>
</div>

<!-- status row 1 -->
<div class="a" style="left:4px;top:659px;width:43px;height:18px;border:1px solid #7F9DB9;background:#fff"></div>
<div class="a" style="left:9px;top:662px;font-size:9px">pt</div>
<div class="sbb" style="left:31px;top:660px;width:15px;height:16px"></div>
<div class="a" style="left:47px;top:659px;width:51px;height:18px;border:1px solid #7F9DB9;background:#fff"></div>
<div class="a" style="left:51px;top:662px;font-size:9px;color:#777;letter-spacing:-0.4px">100.00 %</div>
<div class="a" style="left:86px;top:660px;width:11px;height:16px;background:linear-gradient(#C8D6FA,#B6C9F6)"></div>
<div class="a" style="left:210px;top:658px;width:71px;height:20px;border:1px solid #7F9DB9;background:#fff"></div>
<div class="a" style="left:227px;top:662px;font-size:9px;color:#555">1 von 1</div>
<div class="sbb" style="left:265px;top:659px;width:15px;height:18px"></div>
<div class="a" style="left:327px;top:659px;width:76px;height:19px;border:1px solid #7F9DB9;background:#fff"></div>
<div class="a" style="left:332px;top:662px;font-size:9px">Raute</div>
<div class="sbb" style="left:387px;top:660px;width:15px;height:17px"></div>
<svg class="a" style="left:0;top:0" width="1024" height="708" overflow="visible">
  <path d="M35 665.5L38.5 669L42 665.5M270 665.5L273 669L276 665.5M391 665.5L394.5 669L398 665.5" fill="none" stroke="#4D6185" stroke-width="2"/>
  <path d="M88.5 665L91.5 662L94.5 665M88.5 671L91.5 674L94.5 671" fill="none" stroke="#4D6185" stroke-width="1.6"/>
  <!-- zoom out -->
  <circle cx="106" cy="665" r="5.5" fill="#E8EEF0" stroke="#808A90" stroke-width="1.4"/><path d="M110 669L116 675" stroke="#C08040" stroke-width="2.5"/><path d="M101 673H107" stroke="#20A020" stroke-width="2"/>
  <text x="122" y="672" font-family="Liberation Sans" font-size="11.5" font-weight="bold" fill="#111">1:1</text>
  <circle cx="150" cy="665" r="5.5" fill="#E8EEF0" stroke="#808A90" stroke-width="1.4"/><path d="M154 669L160 675" stroke="#C08040" stroke-width="2.5"/><path d="M145 673H151M148 670V676" stroke="#20A020" stroke-width="2"/>
  <!-- nav -->
  <path d="M170.5 664V672" stroke="#888" stroke-width="1.4"/><path d="M172 668L178 664V672Z" fill="#888"/>
  <path d="M194 668L200 664V672Z" fill="#888"/>
  <path d="M296 668L290 664V672Z" fill="#888"/>
  <path d="M318 668L312 664V672Z" fill="#888"/><path d="M319.5 664V672" stroke="#888" stroke-width="1.4"/>
</svg>
<!-- status row 2 -->
<div class="a" style="left:632px;top:686px;width:99px;height:22px;border:1px solid #7A7A7A;border-radius:3px;background:#fff;box-shadow:inset 1px 1px #ACA899"></div>
<div class="a" style="left:735px;top:691px;font-size:11px">X-Pos:</div>
<div class="a" style="left:767px;top:684px;width:1px;height:24px;background:#D0CCBC"></div>
<div class="a" style="left:771px;top:691px;font-size:11px">579.00 pt</div>
<div class="a" style="left:876px;top:684px;width:1px;height:24px;background:#D0CCBC"></div>
<div class="a" style="left:880px;top:691px;font-size:11px">Y-Pos:</div>
<div class="a" style="left:912px;top:684px;width:1px;height:24px;background:#D0CCBC"></div>
<div class="a" style="left:916px;top:691px;font-size:11px">60.00 pt</div>
<div class="a" style="left:1018px;top:684px;width:1px;height:24px;background:#D0CCBC"></div>

</body></html>
